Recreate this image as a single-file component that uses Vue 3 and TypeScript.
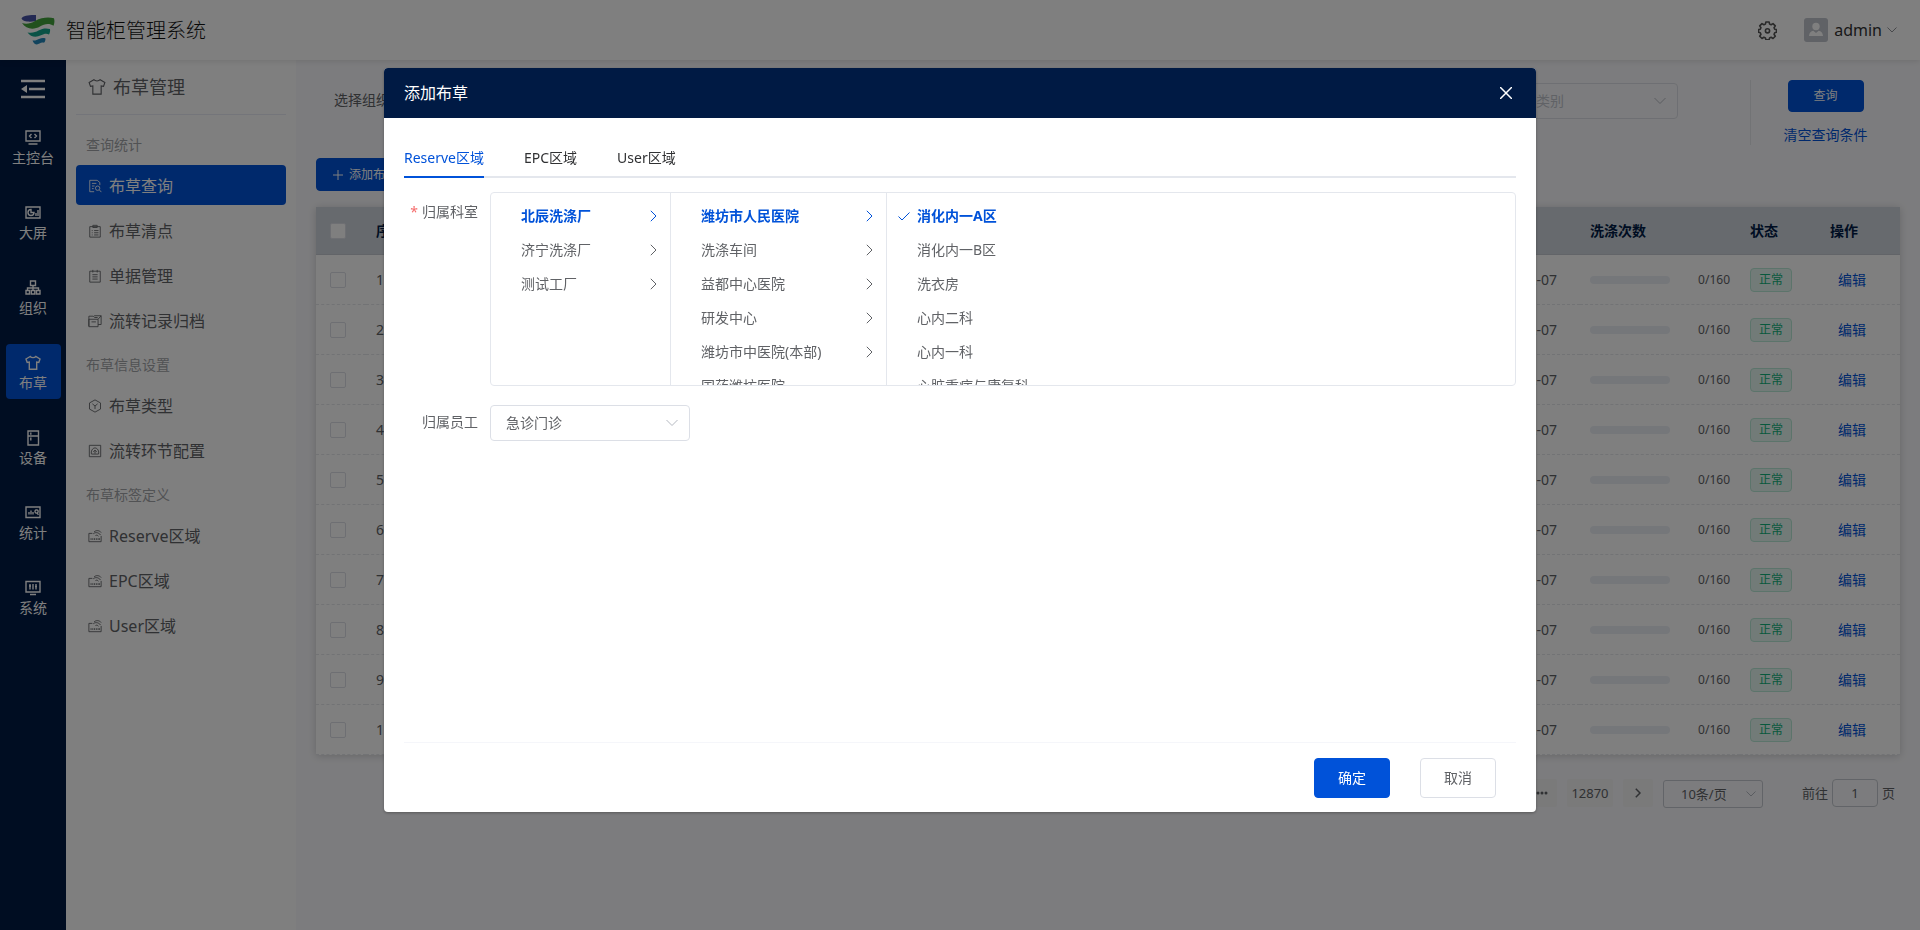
<script setup lang="ts">
import { ref } from 'vue'

interface RailItem { label: string; icon: string }
interface MenuItem { label: string; icon: string }
interface MenuGroup { title: string; items: MenuItem[] }
interface Row { id: number; date: string; washed: number; limit: number }
interface Hospital { name: string; leaf?: boolean }

const icons: Record<string, string> = {
  console: 'M1 1h14v10H1zM3.500 14h9M6.500 4L4.500 6l2 2M9.500 4l2 2-2 2',
  screen: 'M1 2h14v11H1zM6 4.500a3 3 0 1 0 3 3H6zM11 11V8M13 11V5',
  org: 'M5.500 1h5v4.500h-5zM8 5.500V8M2.500 10.500V8h11v2.500M1 10.500h3.500V14H1zM6.300 10.500h3.500V14H6.300zM11.500 10.500H15V14h-3.500zM8 8v2.500',
  shirt: 'M5.200 1.500L1 4l1.200 3.400L4.300 7v7.300h7.400V7l2.100.4L15 4l-4.200-2.500C9.500 3 6.500 3 5.200 1.500z',
  device: 'M3 1h10.500v14H3zM3 6h10.500M5.800 2.500v2.200M5.800 7.500v3',
  stats: 'M1 2h14v10.500H1zM4 9.500V7M6 9.500V5.500M8 9.500V7M11 8a1.600 1.600 0 1 0 0-3 1.600 1.600 0 0 0 0 3M12 8l1.500 1.700',
  system: 'M1 1.500h14v10.500H1zM5 4v5.500M8 4v5.500M11 4v5.500M4 6h2M10 6.500h2M5 14.500h6',
  search: 'M13.500 7V4l-3-2.500H2v13h5M4.500 5h5M4.500 8h3M4.500 11h2M11 13a2.500 2.500 0 1 0 0-5 2.500 2.500 0 0 0 0 5zM13 12.500l2.300 2.500',
  check: 'M2 3h12v12H2zM5.500 1.500h5v2.500h-5zM7 7.500h5M7 10h5M7 12.500h5M4.300 7.500h1M4.300 10h1M4.300 12.500h1',
  bill: 'M2 2.500h12v12.500H2zM5.500 1v3M10.500 1v3M5 6.500h6M5 9h6M5 11.500h6',
  archive: 'M1 14V2.500h5L7.500 4H11M1 6h10.500v8.500H1zM7 2h8v10h-3.500M11.500 6L15 2M4 9h5',
  type: 'M8 1l6.300 3.500v7L8 15l-6.300-3.500v-7zM5 5.500L8 8l3-2.500M8 8v3.500',
  config: 'M1.500 1.500h13v13h-13zM4 11.500c-1-3 1-7 4-7s5 4 4 7M4 11.500h8M6 9l2-2 2 2M8 7v4',
  tag: 'M5 5H1v9.500h14V8M6 5.500C8 3.500 12 3.500 14.500 7M7 3.200C10 .8 13.500 2 15 4M8.500 7.500c1-.8 2.500-.5 3.500.8M3.500 12.500v-2M5.500 12.500v-2M7.500 12.500v-2M9.500 12.500v-2M11.500 12.500v-2M13 12.500v-2',
}

const rail: RailItem[] = [
  { label: '主控台', icon: 'console' },
  { label: '大屏', icon: 'screen' },
  { label: '组织', icon: 'org' },
  { label: '布草', icon: 'shirt' },
  { label: '设备', icon: 'device' },
  { label: '统计', icon: 'stats' },
  { label: '系统', icon: 'system' },
]
const activeRail = ref('布草')

const groups: MenuGroup[] = [
  {
    title: '查询统计',
    items: [
      { label: '布草查询', icon: 'search' },
      { label: '布草清点', icon: 'check' },
      { label: '单据管理', icon: 'bill' },
      { label: '流转记录归档', icon: 'archive' },
    ],
  },
  {
    title: '布草信息设置',
    items: [
      { label: '布草类型', icon: 'type' },
      { label: '流转环节配置', icon: 'config' },
    ],
  },
  {
    title: '布草标签定义',
    items: [
      { label: 'Reserve区域', icon: 'tag' },
      { label: 'EPC区域', icon: 'tag' },
      { label: 'User区域', icon: 'tag' },
    ],
  },
]
const activeMenu = ref('布草查询')

const rows: Row[] = Array.from({ length: 10 }, (_, i) => ({
  id: i + 1,
  date: '2022-12-07',
  washed: 0,
  limit: 160,
}))

const tabs = ['Reserve区域', 'EPC区域', 'User区域']
const activeTab = ref(tabs[0])

const factories = ['北辰洗涤厂', '济宁洗涤厂', '测试工厂']
const hospitals: Hospital[] = [
  { name: '潍坊市人民医院' },
  { name: '洗涤车间' },
  { name: '益都中心医院' },
  { name: '研发中心' },
  { name: '潍坊市中医院(本部)' },
  { name: '国药潍坊医院', leaf: true },
]
const departments = ['消化内一A区', '消化内一B区', '洗衣房', '心内二科', '心内一科', '心脏重症与康复科']
const factory = ref(factories[0])
const hospital = ref(hospitals[0].name)
const department = ref(departments[0])

const staff = ref('急诊门诊')
const category = ref('')
const page = ref('1')
const open = ref(true)
</script>

<template>
  <div class="app">
    <header class="topbar">
      <svg class="logo" viewBox="0 0 36 32" aria-hidden="true">
        <path d="M1.500 4.500C3 1.500 9 .8 16 1v6C10 8.200 3 8 1.500 4.500z" fill="#4652a6" />
        <path d="M2 9c4 1.500 9 .5 13-2 7-4 14-4 19-2.800.8 2.500.5 5-.5 7.500C29 8.500 24 10 20 12.500 14 16 6 15.500 2 9z" fill="#43a33c" />
        <path d="M7.500 18.500c5 .8 8-.3 11-2 4-2.300 8-2.500 11.500-1.500.3 2 0 3.800-1 5.500-2.500-1.500-5-.8-8 .8-5 2.700-10.500 1.700-13.500-2.800z" fill="#15a58c" />
        <path d="M12.500 26.500c3 .3 4.500-.5 6.500-1.500 2.500-1.200 4.500-1.200 6.500-.6 0 1.800-.5 3.200-1.500 4.400-1.700-.6-3-.2-4.500.8-3 1.800-5.500.6-7-3.100z" fill="#2387bb" />
      </svg>
      <h1>智能柜管理系统</h1>
      <button class="icon-btn gear" aria-label="设置">
        <svg viewBox="0 0 20 20" width="19" height="19" fill="none" stroke="currentColor" stroke-width="1.700" stroke-linejoin="round">
          <path d="M8.300 1h3.400l.5 2.300 1.600.7 2-1.300 2.400 2.400-1.300 2 .7 1.600 1.900.4v2.800l-1.900.5-.7 1.600 1.300 2-2.400 2.400-2-1.300-1.600.7-.5 1.900H8.300l-.5-1.900-1.600-.7-2 1.300-2.400-2.400 1.300-2-.7-1.600-1.900-.5V9.100l1.900-.4.700-1.600-1.300-2 2.400-2.400 2 1.300 1.600-.7z" />
          <circle cx="10" cy="10.300" r="2.200" />
        </svg>
      </button>
      <button class="icon-btn user">
        <span class="avatar">
          <svg viewBox="0 0 24 24" width="24" height="24" fill="#fff">
            <circle cx="12" cy="8.500" r="3.700" />
            <path d="M5 18c.3-3.500 2-5 4.300-5.300L12 15l2.700-2.300C17 13 18.700 14.500 19 18z" />
          </svg>
        </span>
        <span>admin</span>
        <svg viewBox="0 0 10 6" width="10" height="6" fill="none" stroke="#909399"><path d="M.5.5L5 5 9.500.5" /></svg>
      </button>
    </header>

    <div class="shell">
      <nav class="rail" aria-label="主导航">
        <button class="icon-btn fold" aria-label="收起菜单">
          <svg viewBox="0 0 24 20" width="24" height="20" fill="none" stroke="#fff" stroke-width="2.400">
            <path d="M0 2h24M8 10h16M0 18h24" /><path d="M6 6v8L0 10z" fill="#fff" stroke="none" />
          </svg>
        </button>
        <a
          v-for="item in rail" :key="item.label" href="#" class="rail-item"
          :class="{ on: item.label === activeRail }" @click.prevent="activeRail = item.label"
        >
          <svg viewBox="0 0 16 16" class="glyph"><path :d="icons[item.icon]" /></svg>
          <span>{{ item.label }}</span>
        </a>
      </nav>

      <aside class="menu">
        <h2>
          <svg viewBox="0 0 16 16" class="glyph big"><path :d="icons.shirt" /></svg>
          <span>布草管理</span>
        </h2>
        <section v-for="group in groups" :key="group.title">
          <h3>{{ group.title }}</h3>
          <a
            v-for="item in group.items" :key="item.label" href="#" class="menu-item"
            :class="{ on: item.label === activeMenu }" @click.prevent="activeMenu = item.label"
          >
            <svg viewBox="0 0 16 16" class="glyph"><path :d="icons[item.icon]" /></svg>
            <span>{{ item.label }}</span>
          </a>
        </section>
      </aside>

      <main>
        <form class="filters" @submit.prevent>
          <label for="org">选择组织</label>
          <span class="select wide">
            <select id="org"><option></option></select>
          </span>
          <span class="select wide last" :class="{ blank: !category }">
            <select v-model="category" aria-label="类别"><option value="">请选择类别</option></select>
            <svg viewBox="0 0 12 7" width="12"><path d="M.5.5L6 6 11.500.5" /></svg>
          </span>
          <div class="actions">
            <button class="btn primary small">查询</button>
            <a href="#" @click.prevent="category = ''">清空查询条件</a>
          </div>
        </form>

        <button class="btn primary add" @click="open = true">
          <svg viewBox="0 0 10 10" width="10" height="10"><path d="M5 0v10M0 5h10" stroke="currentColor" /></svg>
          添加布草
        </button>

        <table>
          <colgroup>
            <col class="c-check"><col class="c-index"><col><col class="c-wash"><col class="c-state"><col class="c-op">
          </colgroup>
          <thead>
            <tr>
              <th class="check"><input type="checkbox" aria-label="全选"></th>
              <th>序号</th><th></th><th>洗涤次数</th><th>状态</th><th>操作</th>
            </tr>
          </thead>
          <tbody>
            <tr v-for="row in rows" :key="row.id">
              <td class="check"><input type="checkbox" :aria-label="'选择第' + row.id + '行'"></td>
              <td>{{ row.id }}</td>
              <td class="date">{{ row.date }}</td>
              <td>
                <div class="wash">
                  <span class="bar"><span :style="{ width: (row.washed / row.limit) * 100 + '%' }"></span></span>
                  <span>{{ row.washed }}/{{ row.limit }}</span>
                </div>
              </td>
              <td><span class="tag">正常</span></td>
              <td class="op"><a href="#" @click.prevent>编辑</a></td>
            </tr>
          </tbody>
        </table>

        <div class="pager">
          <button class="page" aria-label="更多页">
            <svg viewBox="0 0 12 4" width="12" height="4" fill="currentColor"><circle cx="2" cy="2" r="1.500" /><circle cx="6" cy="2" r="1.500" /><circle cx="10" cy="2" r="1.500" /></svg>
          </button>
          <button class="page num">12870</button>
          <button class="page" aria-label="下一页">
            <svg viewBox="0 0 6 10" width="6" height="10" fill="none" stroke="currentColor" stroke-width="1.500"><path d="M.8.8L5 5 .8 9.200" /></svg>
          </button>
          <span class="select size">
            <select aria-label="每页条数"><option>10条/页</option></select>
            <svg viewBox="0 0 10 6" width="10"><path d="M.5.5L5 5 9.500.5" /></svg>
          </span>
          <label class="jump">前往 <input v-model="page" type="text"> 页</label>
        </div>
      </main>
    </div>

    <div v-if="open" class="overlay">
      <div class="dialog" role="dialog" aria-modal="true" aria-labelledby="dialog-title">
        <div class="dialog-head">
          <h2 id="dialog-title">添加布草</h2>
          <button class="icon-btn close" aria-label="关闭" @click="open = false">
            <svg viewBox="0 0 12 12" width="12" height="12"><path d="M0 0l12 12M12 0L0 12" stroke="#fff" stroke-width="1.500" /></svg>
          </button>
        </div>
        <div class="dialog-body">
          <div class="tabs" role="tablist">
            <button
              v-for="tab in tabs" :key="tab" role="tab" :aria-selected="tab === activeTab"
              :class="{ on: tab === activeTab }" @click="activeTab = tab"
            >{{ tab }}</button>
          </div>

          <div class="field">
            <span id="dept-label" class="field-label tall"><i>*</i>归属科室</span>
            <div class="cascader" role="group" aria-labelledby="dept-label">
              <div class="col first">
                <button v-for="name in factories" :key="name" class="node" :class="{ on: name === factory }" @click="factory = name">
                  <span>{{ name }}</span>
                  <svg viewBox="0 0 7 12" width="7" height="12"><path d="M.8.8L6 6 .8 11.200" /></svg>
                </button>
              </div>
              <div class="col second">
                <button v-for="item in hospitals" :key="item.name" class="node" :class="{ on: item.name === hospital }" @click="hospital = item.name">
                  <span>{{ item.name }}</span>
                  <svg v-if="!item.leaf" viewBox="0 0 7 12" width="7" height="12"><path d="M.8.8L6 6 .8 11.200" /></svg>
                </button>
              </div>
              <div class="col third">
                <button v-for="name in departments" :key="name" class="node leaf" :class="{ on: name === department }" @click="department = name">
                  <svg viewBox="0 0 12 9" width="12" height="9"><path d="M.5 4.500L4 8 11.500.5" /></svg>
                  <span>{{ name }}</span>
                </button>
              </div>
            </div>
          </div>

          <div class="field">
            <label class="field-label" for="staff">归属员工</label>
            <span class="select wide">
              <select id="staff" v-model="staff"><option>急诊门诊</option></select>
              <svg viewBox="0 0 12 7" width="12"><path d="M.5.5L6 6 11.500.5" /></svg>
            </span>
          </div>
        </div>
        <div class="dialog-foot">
          <button class="btn primary" @click="open = false">确定</button>
          <button class="btn plain" @click="open = false">取消</button>
        </div>
      </div>
    </div>
  </div>
</template>

<style>
body { margin: 0; }
</style>

<style scoped>
.app {
  --blue: #0052d9;
  --navy: #001a44;
  --line: #dcdfe6;
  display: flex;
  flex-direction: column;
  min-height: 100vh;
  background: #f9f9fc;
  color: #606266;
  font: 14px/20px "Noto Sans", "Noto Sans CJK SC", sans-serif;
}
*, *::before { box-sizing: border-box; }
h1, h2, h3 { margin: 0; font-weight: 400; }
a { color: var(--blue); text-decoration: none; }
button, input, select { font: inherit; color: inherit; margin: 0; }
button { cursor: pointer; }

.icon-btn { display: flex; align-items: center; border: 0; padding: 0; background: none; }
.glyph { width: 16px; height: 16px; fill: none; stroke: currentColor; stroke-width: 1; }

.topbar {
  position: relative;
  z-index: 1;
  display: flex;
  align-items: center;
  height: 60px;
  padding: 0 23px 0 20px;
  background: #fff;
  box-shadow: 0 1px 6px rgba(0, 0, 0, .12);
}
.logo { width: 36px; height: 32px; }
.topbar h1 { margin-left: 10px; padding-top: 2px; font-size: 20px; font-weight: 300; line-height: 30px; color: #111; }
.gear { margin-left: auto; color: #555; }
.user { margin-left: 27px; color: #333; font-size: 16px; }
.avatar { width: 24px; height: 24px; margin-right: 6px; border-radius: 3px; background: #c0c4cc; }
.user > svg { margin-left: 5px; }

.shell { display: flex; flex: 1; }
.rail {
  display: flex;
  flex-direction: column;
  align-items: center;
  gap: 20px;
  width: 66px;
  flex: none;
  padding-top: 19px;
  background: var(--navy);
}
.rail .glyph { stroke-width: 1.4; }
.fold { height: 20px; }
.rail-item {
  display: flex;
  flex-direction: column;
  align-items: center;
  gap: 2px;
  width: 55px;
  height: 55px;
  padding-top: 11px;
  border-radius: 4px;
  color: #fff;
  white-space: nowrap;
}
.rail-item.on { background: var(--blue); }

.menu { width: 230px; flex: none; padding: 0 10px; background: #fff; }
.menu h2 {
  display: flex;
  align-items: center;
  gap: 7px;
  height: 55px;
  margin-bottom: 10px;
  padding-left: 12px;
  border-bottom: 1px solid #e8eaf5;
  font-size: 18px;
}
.glyph.big { width: 18px; height: 18px; }
.menu h3 { padding-left: 10px; font-size: 14px; line-height: 40px; color: #a2a4a8; }
.menu-item {
  display: flex;
  align-items: center;
  gap: 6px;
  height: 40px;
  margin-bottom: 5px;
  padding: 2px 0 0 12px;
  border-radius: 4px;
  font-size: 16px;
  color: #606266;
}
.menu-item .glyph { width: 14px; height: 14px; margin-right: 1px; }
.menu-item.on { background: var(--blue); color: #fff; }

main { flex: 1; min-width: 0; padding: 20px 20px 0; }

.filters { display: flex; align-items: flex-start; padding-left: 18px; }
.filters label { margin-right: 12px; line-height: 40px; }
.filters .select { margin-top: 3px; }
.filters .last { margin-left: auto; }
.actions {
  display: flex;
  flex-direction: column;
  align-items: center;
  gap: 13px;
  width: 150px;
  margin-left: 72px;
  border-left: 1px solid #e4e6ea;
}

.select { position: relative; display: block; }
.select select {
  width: 100%;
  height: 100%;
  padding: 0 15px;
  border: 1px solid var(--line);
  border-radius: 4px;
  background: transparent;
  appearance: none;
}
.select svg {
  position: absolute;
  right: 12px;
  top: 0;
  height: 100%;
  fill: none;
  stroke: #b4b8c0;
  pointer-events: none;
}
.wide { width: 200px; height: 36px; }
.blank select { color: #c0c4cc; }

.btn { width: 76px; height: 40px; border: 1px solid var(--line); border-radius: 4px; padding: 0; background: #fff; }
.btn.primary { border-color: var(--blue); background: var(--blue); color: #fff; }
.btn.small { height: 32px; font-size: 12px; }
.btn.add {
  display: flex;
  align-items: center;
  justify-content: center;
  gap: 6px;
  width: 98px;
  height: 33px;
  margin: 13px 0 16px;
  font-size: 12px;
}

table {
  width: 100%;
  table-layout: fixed;
  border-collapse: separate;
  border-spacing: 0;
  background: #fff;
  box-shadow: 0 1px 8px rgba(0, 0, 0, .18);
}
.c-check { width: 50px; }
.c-index { width: 60px; }
.c-wash { width: 160px; }
.c-state, .c-op { width: 80px; }
th, td { padding: 0 10px; text-align: left; white-space: nowrap; }
th { height: 48px; border-bottom: 1px solid #c4c9d0; background: #ced4dc; color: var(--navy); font-weight: 700; }
td { height: 50px; border-bottom: 1px dashed #e4e6ea; }
.check { padding: 0 14px; }
.check input {
  display: block;
  width: 16px;
  height: 16px;
  border: 1px solid var(--line);
  border-radius: 2px;
  background: #fff;
  appearance: none;
}
.date { padding-right: 23px; text-align: right; }
.wash { display: flex; align-items: center; justify-content: space-between; font-size: 12px; }
.bar { width: 80px; height: 8px; border-radius: 4px; background: #ebeef5; overflow: hidden; }
.bar span { display: block; height: 100%; background: var(--blue); }
.tag {
  display: block;
  width: 42px;
  height: 24px;
  border: 1px solid #b8e8d6;
  border-radius: 4px;
  background: #e4f7f0;
  color: #12b37a;
  font-size: 12px;
  line-height: 22px;
  text-align: center;
}
td.op { padding-left: 18px; }

.pager { display: flex; align-items: center; justify-content: flex-end; margin-top: 23px; font-size: 13px; }
.page {
  display: flex;
  align-items: center;
  justify-content: center;
  width: 30px;
  height: 28px;
  margin-right: 10px;
  padding: 0;
  border: 0;
  border-radius: 2px;
  background: #f4f4f5;
}
.page.num { width: 46px; }
.size { width: 100px; height: 28px; margin-top: 2px; }
.size select { padding: 0 17px; border-color: #c4c8d0; border-radius: 3px; }
.size svg { right: 7px; }
.jump { display: flex; align-items: center; gap: 4px; margin-left: 39px; margin-right: 5px; }
.jump input {
  width: 46px;
  height: 28px;
  padding: 0;
  border: 1px solid #c4c8d0;
  border-radius: 4px;
  background: transparent;
  text-align: center;
}

.overlay {
  position: fixed;
  inset: 0;
  z-index: 10;
  display: flex;
  align-items: flex-start;
  justify-content: center;
  padding-top: 68px;
  background: rgba(0, 0, 0, .5);
}
.dialog {
  display: flex;
  flex-direction: column;
  width: 60%;
  height: 80vh;
  border-radius: 4px;
  background: #fff;
  box-shadow: 0 1px 3px rgba(0, 0, 0, .3);
  overflow: hidden;
}
.dialog-head {
  display: flex;
  align-items: center;
  justify-content: space-between;
  height: 50px;
  flex: none;
  padding: 0 24px 0 20px;
  background: var(--navy);
  color: #fff;
}
.dialog-head h2 { font-size: 16px; }
.dialog-body { flex: 1; padding: 20px 20px 0; overflow: hidden; }
.tabs { display: flex; gap: 40px; height: 40px; margin-bottom: 14px; box-shadow: inset 0 -2px #e4e7ed; }
.tabs button { padding: 2px 0 0; border: 0; border-bottom: 2px solid transparent; background: none; color: #303133; }
.tabs .on { border-color: var(--blue); color: var(--blue); }

.field { display: flex; margin-bottom: 19px; }
.field-label { width: 86px; flex: none; padding-right: 12px; line-height: 34px; text-align: right; }
.field-label.tall { line-height: 40px; }
.field-label i { margin-right: 4px; color: #f56c6c; font-style: normal; }
.cascader { display: flex; flex: 1; height: 194px; border: 1px solid #e4e7ed; border-radius: 4px; overflow: hidden; }
.col { padding-top: 6px; border-right: 1px solid #e4e7ed; overflow: hidden; }
.col.first { width: 180px; flex: none; }
.col.second { width: 216px; flex: none; }
.col.third { flex: 1; border: 0; }
.node {
  display: flex;
  align-items: center;
  justify-content: space-between;
  width: 100%;
  height: 34px;
  padding: 0 13px 0 30px;
  border: 0;
  background: none;
}
.node svg { fill: none; stroke: currentColor; }
.node.on { color: var(--blue); font-weight: 700; }
.leaf { justify-content: flex-start; gap: 7px; padding-left: 11px; }
.leaf svg { visibility: hidden; }
.leaf.on svg { visibility: visible; }

.dialog-foot {
  display: flex;
  justify-content: flex-end;
  gap: 30px;
  margin: 0 20px;
  padding: 15px 20px 14px;
  border-top: 1px solid #f5f6fa;
}
</style>
